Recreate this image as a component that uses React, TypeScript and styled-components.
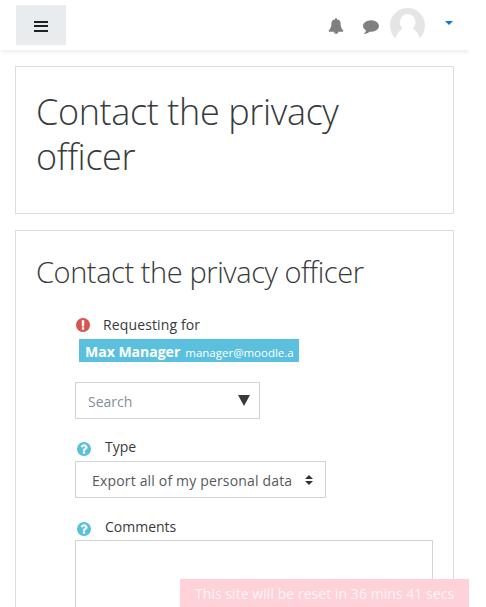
import React from 'react';
import styled, { createGlobalStyle } from 'styled-components';

const GlobalStyle = createGlobalStyle`
* {
    box-sizing: border-box;
}
html, body {
    margin: 0;
    height: 100%;
    overflow: hidden;
    background: #fff;
}
body {
    font-family: "Segoe UI", "Open Sans", "Noto Sans", sans-serif;
    font-size: 14px;
    line-height: 22px;
    color: #373a3c;
}
`

const Page = styled.div`
width: 469px;
height: 607px;
overflow: hidden;
`

const Navbar = styled.header`
display: flex;
align-items: flex-start;
height: 50px;
padding: 5px 16px 0;
background: #fff;
box-shadow: 0 2px 4px rgba(0, 0, 0, .08);
`

const DrawerButton = styled.button`
display: flex;
justify-content: center;
width: 50px;
height: 40px;
padding: 16px 0 0;
border: none;
background: #e9ecef;
`

const NavTools = styled.div`
display: flex;
flex: 1;
justify-content: flex-end;
`

const NavIcon = styled.svg<{ $left: number }>`
width: 16px;
height: 16px;
margin: 13px 0 0 ${p => p.$left}px;
fill: #7f7f7f;
`

const Avatar = styled.svg`
width: 35px;
height: 35px;
margin: 3px 20px 0 11px;
`

const Caret = styled.span`
width: 8px;
height: 4px;
margin-top: 16px;
border: 4px solid transparent;
border-top-color: #1177d1;
border-bottom: 0;
`

const Main = styled.main`
display: flex;
flex-direction: column;
gap: 16px;
padding: 16px 15px 0;
`

const Card = styled.section<{ $height: number }>`
height: ${p => p.$height}px;
padding: 22px 20px 0;
border: 1px solid #dcdddf;
`

const Title = styled.h1`
margin: 0;
font-size: 36px;
font-weight: 300;
line-height: 45px;
letter-spacing: -0.37px;
`

const Subtitle = styled.h2`
margin: 1px 0 24px;
font-size: 29px;
font-weight: 300;
line-height: 36px;
letter-spacing: -0.42px;
white-space: nowrap;
`

const Form = styled.form`
padding-left: 39px;
`

const Label = styled.label<{ $gap: number, $indent: number, $spacing?: number }>`
display: flex;
align-items: center;
gap: ${p => p.$gap}px;
height: 22px;
padding-left: ${p => p.$indent}px;
letter-spacing: ${p => p.$spacing ?? 0}px;
`

const StatusIcon = styled.svg<{ $color: string, $drop?: number }>`
width: 14px;
height: 14px;
margin-top: ${p => p.$drop ?? 0}px;
fill: ${p => p.$color};
`

const Badge = styled.div`
display: flex;
align-items: baseline;
gap: 5px;
width: 220px;
height: 23px;
margin: 3px 0 20px 4px;
padding-left: 6px;
background: #5bc0de;
color: #fff;
line-height: 25px;
white-space: nowrap;
`

const BadgeName = styled.b`
letter-spacing: 0;
`

const BadgeMail = styled.small`
font-size: 11.5px;
`

const Field = styled.div<{ $width: number, $pad: string }>`
display: flex;
align-items: center;
justify-content: space-between;
width: ${p => p.$width}px;
height: 37px;
padding: ${p => p.$pad};
border: 1px solid #ced4da;
white-space: nowrap;
`

const Placeholder = styled.span`
padding-top: 2px;
color: #868e96;
`

const Value = styled.span`
padding-top: 2px;
color: #55595c;
letter-spacing: .17px;
`

const Comments = styled.div`
width: 358px;
height: 120px;
margin-top: 2px;
border: 1px solid #ced4da;
`

const Spacer = styled.div<{ $size: number }>`
height: ${p => p.$size}px;
`

const ResetNotice = styled.div`
position: fixed;
top: 579px;
left: 180px;
width: 289px;
height: 28px;
padding-left: 15px;
background: #ffd1d9;
color: #f9f7f8;
line-height: 29px;
letter-spacing: .05px;
white-space: nowrap;
`

const Required = () => (
    <StatusIcon viewBox="128 128 1536 1536" $color="#d9534f">
        <path d="M896 128q209 0 385.5 103t279.5 279.5 103 385.5-103 385.5-279.5 279.5-385.5 103-385.5-103-279.5-279.5-103-385.5 103-385.5 279.5-279.5 385.5-103zm128 1247v-190q0-14-9-23.5t-22-9.5h-192q-13 0-23 10t-10 23v190q0 13 10 23t23 10h192q13 0 22-9.5t9-23.5zm-2-344l18-621q0-12-10-18-10-8-24-8h-220q-14 0-24 8-10 6-10 18l17 621q0 10 10 17.5t24 7.5h185q14 0 23.5-7.5t10.5-17.5z" />
    </StatusIcon>
)

const Help = () => (
    <StatusIcon viewBox="128 128 1536 1536" $color="#5bc0de" $drop={4}>
        <path d="M1024 1376v-192q0-14-9-23t-23-9h-192q-14 0-23 9t-9 23v192q0 14 9 23t23 9h192q14 0 23-9t9-23zm256-672q0-88-55.5-163t-138.5-116-170-41q-243 0-371 213-15 24 8 42l132 100q7 6 19 6 16 0 25-12 53-68 86-92 34-24 86-24 48 0 85.5 26t37.5 59q0 38-20 61t-68 45q-63 28-115.5 86.5t-52.5 125.5v36q0 14 9 23t23 9h192q14 0 23-9t9-23q0-19 21.5-49.5t54.5-49.5q32-18 49-28.5t46-35 44.5-48 28-60.5 12.5-81zm384 192q0 209-103 385.5t-279.5 279.5-385.5 103-385.5-103-279.5-279.5-103-385.5 103-385.5 279.5-279.5 385.5-103 385.5 103 279.5 279.5 103 385.5z" />
    </StatusIcon>
)

const App: React.FC = () => {
    return (
        <Page>
            <GlobalStyle />
            <Navbar>
                <DrawerButton type="button" aria-label="Side panel">
                    <svg width="14" height="11" fill="#1d2125">
                        <path d="M0 0h14v2H0zM0 4h14v2H0zM0 9h14v2H0z" />
                    </svg>
                </DrawerButton>
                <NavTools>
                    <NavIcon viewBox="0 0 1792 1792" $left={0}>
                        <path d="M912 1696q0-16-16-16-59 0-101.5-42.5t-42.5-101.5q0-16-16-16t-16 16q0 73 51.5 124.5t124.5 51.5q16 0 16-16zm816-288q0 52-38 90t-90 38h-448q0 106-75 181t-181 75-181-75-75-181h-448q-52 0-90-38t-38-90q50-42 91-88t85-119.5 74.5-158.5 50-206 19.5-260q0-152 117-282.5t307-158.5q-8-19-8-39 0-40 28-68t68-28 68 28 28 68q0 20-8 39 190 28 307 158.5t117 282.5q0 139 19.5 260t50 206 74.5 158.5 85 119.5 91 88z" />
                    </NavIcon>
                    <NavIcon viewBox="0 0 1792 1792" $left={19}>
                        <path d="M1792 896q0 174-120 321.5t-326 233-450 85.5q-70 0-145-8-198 175-460 242-49 14-114 22-17 2-30.5-9t-17.5-29v-1q-3-4-.5-12t2-10 4.5-9.5l6-9 7-8.5 8-9q7-8 31-34.5t34.5-38 31-39.5 32.5-51 27-59 26-76q-157-89-247.5-220t-90.5-281q0-130 71-248.5t191-204.5 286-136.5 348-50.5q244 0 450 85.5t326 233 120 321.5z" />
                    </NavIcon>
                    <Avatar viewBox="0 0 35 35">
                        <circle cx="17.5" cy="17.5" r="17.5" fill="#e5e5e5" />
                        <ellipse cx="17.7" cy="14.3" rx="7.8" ry="8.3" fill="#fff" />
                        <path d="M5.5 35V30.5Q8 22.5 13 20.5H22.5Q27.5 22.5 29.8 30.5V35Z" fill="#fff" />
                    </Avatar>
                    <Caret />
                </NavTools>
            </Navbar>
            <Main>
                <Card $height={148}>
                    <Title>Contact the privacy officer</Title>
                </Card>
                <Card $height={420}>
                    <Subtitle>Contact the privacy officer</Subtitle>
                    <Form>
                        <Label $gap={13} $indent={1} $spacing={.13}><Required />Requesting for</Label>
                        <Badge>
                            <BadgeName>Max Manager</BadgeName>
                            <BadgeMail>manager@moodle.a</BadgeMail>
                        </Badge>
                        <Field $width={185} $pad="0 9px 0 12px">
                            <Placeholder>Search</Placeholder>
                            <svg width="12" height="11" fill="#373a3c"><path d="M0 0h12L6 11z" /></svg>
                        </Field>
                        <Spacer $size={17} />
                        <Label $gap={14} $indent={2}><Help />Type</Label>
                        <Spacer $size={3} />
                        <Field $width={251} $pad="0 12px 0 16px">
                            <Value>Export all of my personal data</Value>
                            <svg width="8" height="10" fill="#333"><path d="M4 0l4 4H0zM0 6h8l-4 4z" /></svg>
                        </Field>
                        <Spacer $size={18} />
                        <Label $gap={14} $indent={2}><Help />Comments</Label>
                        <Comments />
                    </Form>
                </Card>
            </Main>
            <ResetNotice>This site will be reset in 36 mins 41 secs</ResetNotice>
        </Page>
    )
}

export default App
